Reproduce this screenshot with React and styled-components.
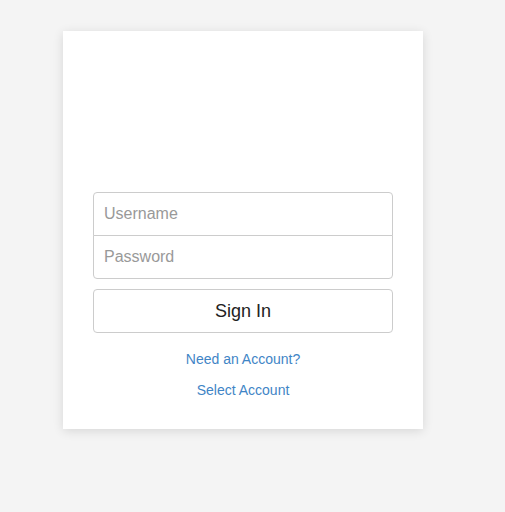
import React from "react";
import styled, { createGlobalStyle } from "styled-components";

const Global = createGlobalStyle`
  html, body { margin: 0; padding: 0; background: #f4f4f4; }
  body { font-family: "Liberation Sans", Arial, sans-serif; }
  * { box-sizing: border-box; }
`;

const Page = styled.div`
  padding: 31px 0 0 63px;
  min-height: 512px;
`;

const Card = styled.div`
  width: 360px;
  height: 398px;
  background: #fff;
  box-shadow: 0 2px 10px rgba(0, 0, 0, 0.12);
  padding: 0 30px;
  display: flex;
  flex-direction: column;
`;

const LogoArea = styled.div`
  height: 161px;
  flex: none;
`;

const InputGroup = styled.div`
  display: flex;
  flex-direction: column;
`;

const Field = styled.input`
  width: 300px;
  height: 44px;
  margin-top: ${(p) => (p.$first ? "0" : "-1px")};
  border: 1px solid #ccc;
  border-radius: ${(p) => (p.$first ? "4px 4px 0 0" : "0 0 4px 4px")};
  padding: 0 10px;
  font-family: "Liberation Sans", Arial, sans-serif;
  font-size: 16px;
  color: #555;
  background: #fff;
  outline: none;
  &::placeholder { color: #999; }
`;

const Button = styled.button`
  margin-top: 10px;
  width: 300px;
  height: 44px;
  border: 1px solid #ccc;
  border-radius: 4px;
  background: #fff;
  color: #222;
  font-family: "Liberation Sans", Arial, sans-serif;
  font-size: 18px;
  cursor: pointer;
`;

const Links = styled.div`
  margin-top: 16px;
  display: flex;
  flex-direction: column;
  align-items: center;
  gap: 11px;
`;

const Link = styled.a`
  font-size: 14px;
  line-height: 20px;
  color: #3f85c6;
  text-decoration: none;
`;

export default function App() {
  return (
    <>
      <Global />
      <Page>
        <Card>
          <LogoArea />
          <InputGroup>
            <Field $first placeholder="Username" />
            <Field type="password" placeholder="Password" />
          </InputGroup>
          <Button>Sign In</Button>
          <Links>
            <Link href="#">Need an Account?</Link>
            <Link href="#">Select Account</Link>
          </Links>
        </Card>
      </Page>
    </>
  );
}
